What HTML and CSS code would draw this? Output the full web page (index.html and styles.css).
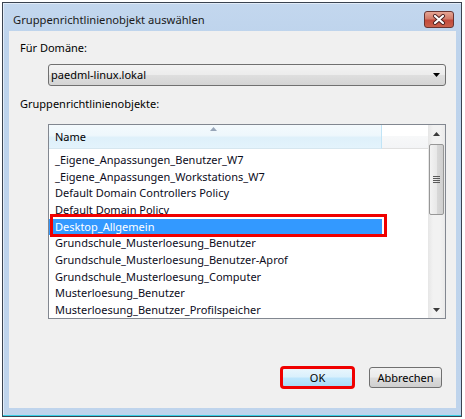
FILE: index.html
```html
<!DOCTYPE html>
<html lang="de">
<head>
<meta charset="utf-8">
<title>Gruppenrichtlinienobjekt auswählen</title>
<link rel="stylesheet" href="styles.css">
</head>
<body>
<div class="window">
  <div class="titlebar">
    <span class="title">Gruppenrichtlinienobjekt auswählen</span>
    <div class="close">
      <svg width="14" height="11" viewBox="0 0 14 11">
        <path d="M3 2 L11 9 M11 2 L3 9" stroke="#4a2020" stroke-width="4" stroke-linecap="round"/>
        <path d="M3 2 L11 9 M11 2 L3 9" stroke="#ffffff" stroke-width="2.2" stroke-linecap="round"/>
      </svg>
    </div>
  </div>
  <div class="client">
    <div class="label">Für Domäne:</div>
    <div class="combo">
      <span class="combo-text">paedml-linux.lokal</span>
      <svg class="combo-arrow" width="7" height="4" viewBox="0 0 7 4"><path d="M0 0 H7 L3.5 4 Z" fill="#000"/></svg>
    </div>
    <div class="label label2">Gruppenrichtlinienobjekte:</div>
    <div class="list">
      <div class="list-main">
        <div class="header">
          <div class="col-name">
            <svg class="sort" width="7" height="4" viewBox="0 0 7 4"><path d="M0 4 L3.5 0 L7 4 Z" fill="#97a5b8"/></svg>
            <span>Name</span>
          </div>
          <div class="col-rest"></div>
        </div>
        <div class="rows">
          <div class="row">_Eigene_Anpassungen_Benutzer_W7</div>
          <div class="row">_Eigene_Anpassungen_Workstations_W7</div>
          <div class="row">Default Domain Controllers Policy</div>
          <div class="row">Default Domain Policy</div>
          <div class="row selected"><span class="sel">Desktop_Allgemein</span></div>
          <div class="row">Grundschule_Musterloesung_Benutzer</div>
          <div class="row">Grundschule_Musterloesung_Benutzer-Aprof</div>
          <div class="row">Grundschule_Musterloesung_Computer</div>
          <div class="row">Musterloesung_Benutzer</div>
          <div class="row">Musterloesung_Benutzer_Profilspeicher</div>
        </div>
        <div class="highlight"></div>
      </div>
      <div class="scrollbar">
        <div class="sb-btn">
          <svg width="7" height="4" viewBox="0 0 7 4"><path d="M0 4 L3.5 0 L7 4 Z" fill="#3c3c3c"/></svg>
        </div>
        <div class="thumb">
          <div class="grip"></div>
        </div>
        <div class="track"></div>
        <div class="sb-btn">
          <svg width="7" height="4" viewBox="0 0 7 4"><path d="M0 0 H7 L3.5 4 Z" fill="#3c3c3c"/></svg>
        </div>
      </div>
    </div>
    <div class="buttons">
      <div class="btn btn-ok">OK</div>
      <div class="btn">Abbrechen</div>
    </div>
  </div>
</div>
</body>
</html>
```
FILE: styles.css
```css
html, body {
  margin: 0;
  padding: 0;
  background: #ffffff;
}
body {
  width: 465px;
  height: 419px;
  overflow: hidden;
  font-family: "Noto Sans", "Liberation Sans", sans-serif;
  font-size: 11px;
  color: #000;
}
.window {
  margin: 2px 0 0 2px;
  width: 460px;
  height: 415px;
  box-sizing: border-box;
  border: 1px solid #3a4350;
  background: linear-gradient(#c3d7ee, #bdd3ec 40px, #bfd4ec);
  padding: 0 5px 8px 6px;
  display: flex;
  flex-direction: column;
  box-shadow: inset 0 -1px 0 #3ad0e6, inset 1px 1px 0 #e2ecf8;
}
.titlebar {
  height: 28px;
  display: flex;
  justify-content: space-between;
  align-items: flex-start;
}
.title {
  padding: 9px 0 0 4px;
  line-height: 16px;
  font-size: 11.2px;
  color: #1a1a1a;
}
.close {
  margin: 8px 2px 0 0;
  width: 30px;
  height: 17px;
  box-sizing: border-box;
  border: 1px solid #6a3430;
  border-radius: 3px;
  background: linear-gradient(#e6a695, #d27b69 45%, #c34a3b 55%, #c9614c);
  display: flex;
  align-items: center;
  justify-content: center;
}
.client {
  flex: 1;
  background: #f0f0f0;
  padding: 9px 0 0 11px;
  display: flex;
  flex-direction: column;
}
.label {
  line-height: 16px;
  height: 16px;
}
.combo {
  margin: 8px 0 0 28px;
  width: 398px;
  height: 22px;
  box-sizing: border-box;
  border: 1px solid #707070;
  border-radius: 3px;
  background: linear-gradient(#f3f3f3, #ececec 48%, #dedede 52%, #d4d4d4);
  display: flex;
  align-items: center;
  justify-content: space-between;
  padding: 0 5px 0 2px;
}
.combo-text {
  line-height: 16px;
}
.label2 {
  margin-top: 10px;
}
.list {
  position: relative;
  margin: 12px 0 0 28px;
  width: 398px;
  height: 195px;
  box-sizing: border-box;
  border: 1px solid #828790;
  background: #fff;
  display: flex;
  overflow: hidden;
}
.list-main {
  width: 379px;
  display: flex;
  flex-direction: column;
}
.header {
  height: 24px;
  display: flex;
  flex: none;
}
.col-name {
  position: relative;
  width: 333px;
  border-right: 1px solid #c1e4f6;
  background: linear-gradient(#f4fafd, #eef7fc 45%, #def0fa 55%, #e3f3fc);
  border-bottom: 1px solid #d6e6ef;
  box-sizing: border-box;
  padding-left: 6px;
  display: flex;
  align-items: center;
}
.sort {
  position: absolute;
  left: 161px;
  top: 2px;
}
.col-rest {
  flex: 1;
  background: linear-gradient(#ffffff 50%, #f7f8f9 50%, #f3f4f6);
  border-bottom: 1px solid #e0e0e0;
}
.rows {
  padding-top: 3px;
}
.row {
  height: 16.67px;
  line-height: 16.67px;
  padding-left: 6px;
  white-space: nowrap;
  color: #0c0c1c;
}
.row.selected {
  width: 333px;
  box-sizing: border-box;
  background: #3399ff;
  color: #fff;
}
.highlight {
  position: absolute;
  left: 1px;
  top: 89px;
  width: 337px;
  height: 23px;
  box-sizing: border-box;
  border: 3px solid #f00000;
}
.scrollbar {
  width: 17px;
  display: flex;
  flex-direction: column;
  background: linear-gradient(90deg, #e6e6e6, #f2f2f2 30%, #f2f2f2 70%, #eaeaea);
}
.sb-btn {
  height: 17px;
  flex: none;
  display: flex;
  align-items: center;
  justify-content: center;
}
.thumb {
  margin: 2px 1px 0 1px;
  height: 71px;
  box-sizing: border-box;
  border: 1px solid #979797;
  border-radius: 2px;
  background: linear-gradient(90deg, #f3f3f3, #e8e8e8 50%, #d9d9d9 51%, #cfcfcf);
  display: flex;
  align-items: center;
  justify-content: center;
}
.grip {
  width: 7px;
  height: 7px;
  background: repeating-linear-gradient(#5a5a5a 0 1px, transparent 1px 2px);
}
.track {
  flex: 1;
}
.buttons {
  margin: 48px 0 0 261px;
  display: flex;
  gap: 15px;
}
.btn {
  width: 73px;
  height: 21px;
  box-sizing: border-box;
  border: 1px solid #707070;
  border-radius: 3px;
  background: linear-gradient(#f2f2f2, #ebebeb 48%, #dddddd 52%, #cfcfcf);
  display: flex;
  align-items: center;
  justify-content: center;
  line-height: 16px;
}
.btn-ok {
  border-color: #3c7fb1;
  background: linear-gradient(#eaf6fd, #d9f0fc 48%, #bee6fd 52%, #a7d9f5);
  outline: 3px solid #f00000;
  outline-offset: -2px;
}
```
